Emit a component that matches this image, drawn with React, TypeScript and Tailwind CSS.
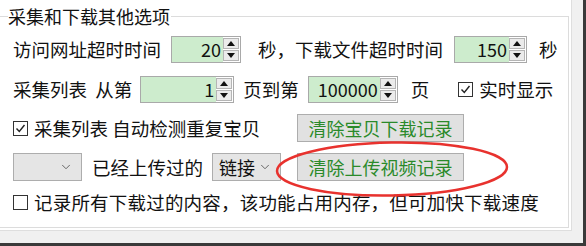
import { ChevronDown } from 'lucide-react';

const font = { fontFamily: '"Noto Sans CJK SC", "Microsoft YaHei", sans-serif' };

function Spin({ value, className }: { value: string; className: string }) {
    return (
        <div className={`flex h-[27px] border border-[#a9a9a9] bg-[#cdeccd] ${className}`}>
            <div className="flex-1 text-right pr-[2px] text-[18px] leading-[25px] text-[#111]">{value}</div>
            <div className="flex flex-col w-[17px] py-[1px] pr-[1px] gap-[1px] bg-white">
                <div className="flex-1 flex items-center justify-center border border-[#b5b5b5] bg-[#ebebeb]">
                    <svg width="8" height="5" viewBox="0 0 8 5"><polygon points="0,5 8,5 4,0" fill="#111" /></svg>
                </div>
                <div className="flex-1 flex items-center justify-center border border-[#b5b5b5] bg-[#ebebeb]">
                    <svg width="8" height="5" viewBox="0 0 8 5"><polygon points="0,0 8,0 4,5" fill="#111" /></svg>
                </div>
            </div>
        </div>
    );
}

function Check({ checked }: { checked?: boolean }) {
    return (
        <div className="w-[15px] h-[15px] border border-[#333] bg-white flex items-center justify-center">
            {checked && (
                <svg width="11" height="11" viewBox="0 0 11 11">
                    <path d="M1.5 5.5 L4.3 8.5 L9.5 2" fill="none" stroke="#222" strokeWidth="1.4" />
                </svg>
            )}
        </div>
    );
}

function Combo({ text, className }: { text?: string; className: string }) {
    return (
        <div className={`flex items-center h-[28px] border border-[#adadad] bg-[#e5e5e5] pl-[6px] pr-[8px] ${className}`}>
            <span className="flex-1 text-[18px] text-[#111]">{text}</span>
            <ChevronDown size={14} strokeWidth={1.5} color="#555" />
        </div>
    );
}

function Btn({ text }: { text: string }) {
    return (
        <div className="w-[167px] h-[28px] flex items-center justify-center border border-[#adadad] bg-[#e1e1e1] text-[18px] text-[#2a8a2a]">
            {text}
        </div>
    );
}

export default function App() {
    return (
        <div style={font} className="w-[586px] h-[246px] overflow-hidden bg-[#3a3a3a] text-[#111]">
            <div className="w-[583px] h-[243px] bg-[#f0f0f0] overflow-hidden">
                <div className="w-[572px] h-[231px] bg-white border-r border-b border-[#dedede] overflow-hidden">
                    <div className="relative mt-[16px] -ml-[2px] w-[571px] h-[212px] border border-[#dcdcdc] pl-[14px] text-[18.5px] leading-none">
                        <div className="absolute -top-[11px] left-[9px] bg-white pr-[1px] text-[18px] leading-[20px]">采集和下载其他选项</div>

                        <div className="flex items-center mt-[18px] h-[28px]">
                            <span>访问网址超时时间</span>
                            <Spin value="20" className="w-[70px] ml-[10px]" />
                            <span className="ml-[17px]">秒，下载文件超时时间</span>
                            <Spin value="150" className="w-[73px] ml-[11px]" />
                            <span className="ml-[12px]">秒</span>
                        </div>

                        <div className="flex items-center mt-[13px] h-[26px]">
                            <span>采集列表&nbsp;&nbsp;从第</span>
                            <Spin value="1" className="w-[94px] ml-[8px]" />
                            <span className="ml-[9px]">页到第</span>
                            <Spin value="100000" className="w-[90px] ml-[9px]" />
                            <span className="ml-[13px]">页</span>
                            <div className="ml-[29px]"><Check checked /></div>
                            <span className="ml-[6px]">实时显示</span>
                        </div>

                        <div className="flex items-center mt-[12px] h-[28px]">
                            <Check checked />
                            <span className="ml-[6px]">采集列表&nbsp;自动检测重复宝贝</span>
                            <div className="ml-auto mr-[104px]"><Btn text="清除宝贝下载记录" /></div>
                        </div>

                        <div className="flex items-center mt-[11px] h-[28px]">
                            <Combo className="w-[69px]" />
                            <span className="ml-[10px]">已经上传过的</span>
                            <Combo text="链接" className="w-[69px] ml-[9px]" />
                            <div className="ml-auto mr-[104px]"><Btn text="清除上传视频记录" /></div>
                        </div>

                        <div className="flex items-center mt-[10px] h-[22px]">
                            <Check />
                            <span className="ml-[6px] tracking-[0.2px]">记录所有下载过的内容，该功能占用内存，但可加快下载速度</span>
                        </div>

                        <svg className="absolute left-[274px] top-[122px]" width="240" height="60" viewBox="0 0 240 60">
                            <ellipse cx="119" cy="30" rx="115" ry="26.5" fill="none" stroke="#e8322e" strokeWidth="2.5" transform="rotate(-1 119 30)" />
                        </svg>
                    </div>
                </div>
            </div>
        </div>
    );
}
